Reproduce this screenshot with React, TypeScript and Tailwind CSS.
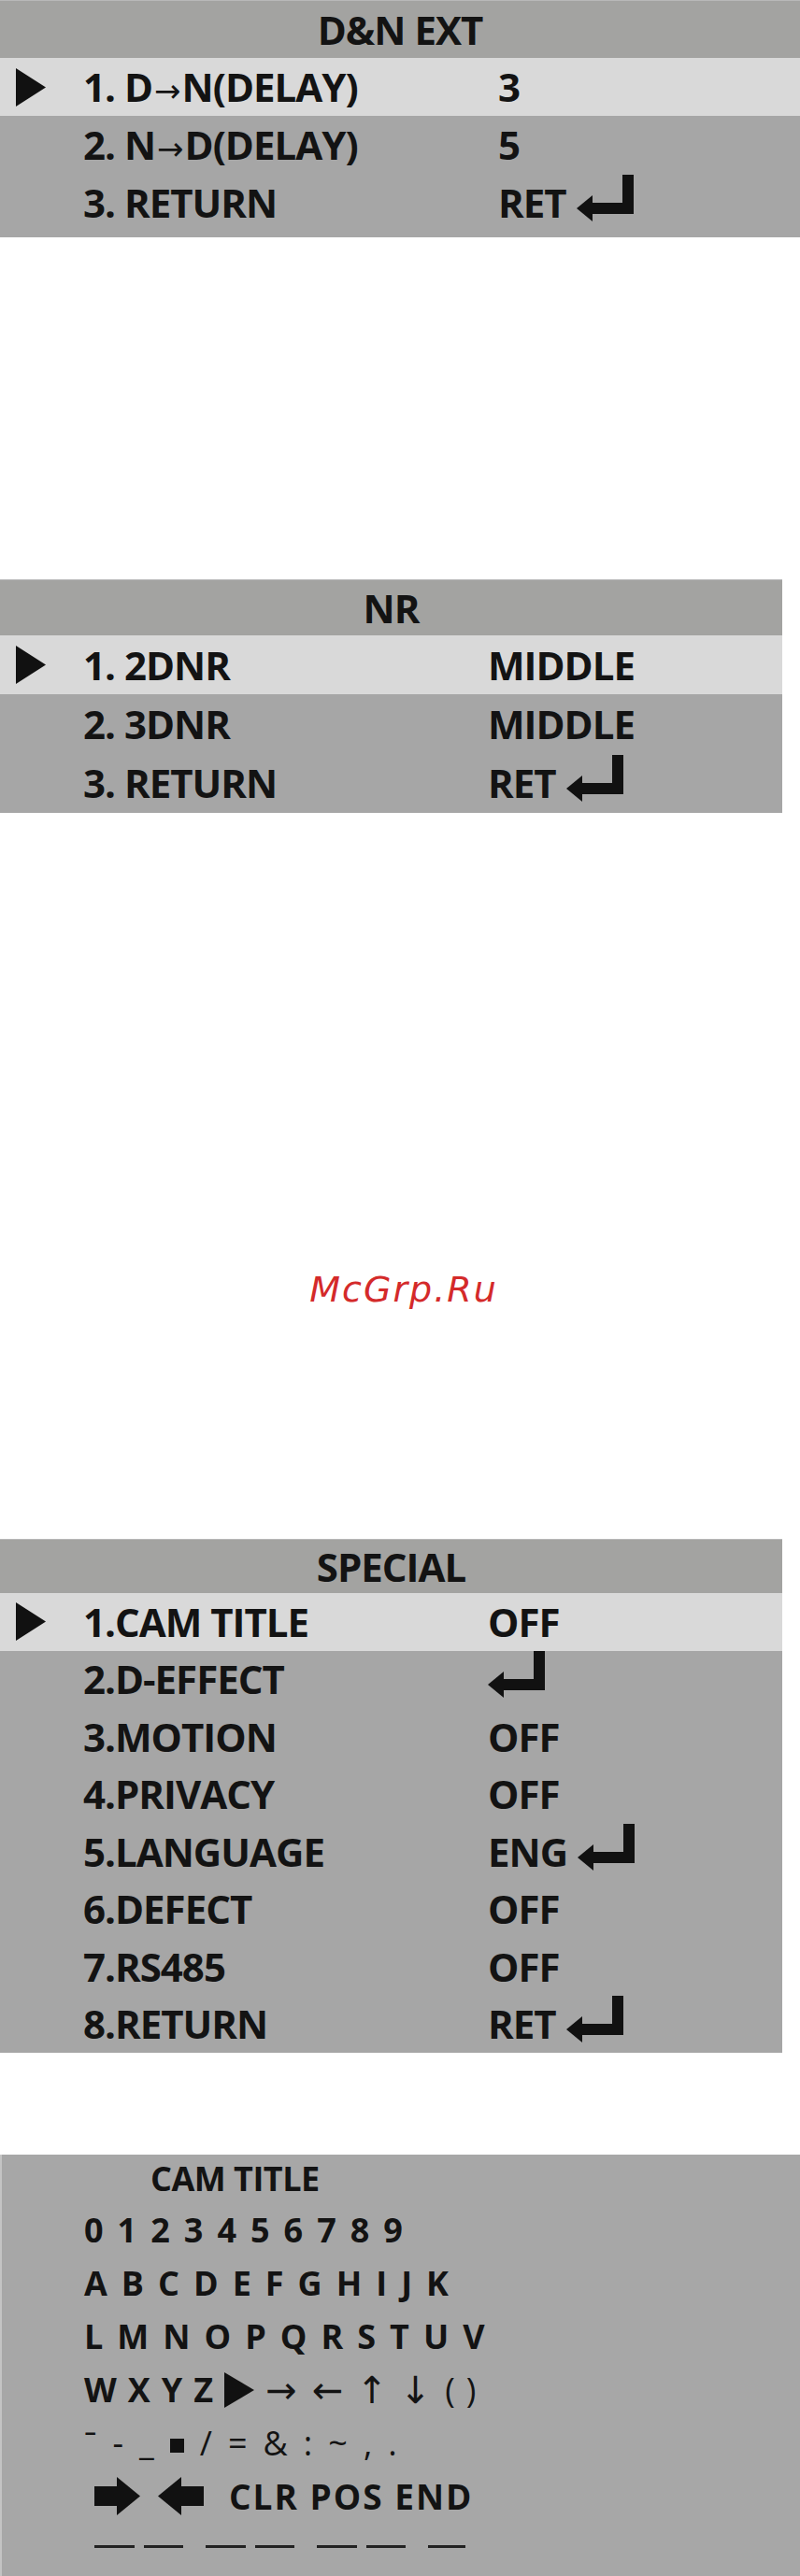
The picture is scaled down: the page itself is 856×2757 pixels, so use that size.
import type { ReactNode } from "react";
import clsx from "clsx";

type Item = {
  label: ReactNode;
  value?: string;
  enter?: boolean;
  active?: boolean;
};

function Pointer() {
  return (
    <svg width="32" height="41" viewBox="0 0 32 41">
      <polygon points="0,0 32,20.5 0,41" fill="#111" />
    </svg>
  );
}

// the "enter" key glyph used next to sub-menu values
function EnterKey() {
  return (
    <svg width="61" height="50" viewBox="0 0 61 50" className="mb-[10px] shrink-0">
      <rect x="49" y="0" width="12" height="42" fill="#111" />
      <rect x="14" y="30" width="47" height="12" fill="#111" />
      <polygon points="0,36 17,22 17,50" fill="#111" />
    </svg>
  );
}

function Arrow() {
  return <span className="font-normal font-['DejaVu_Sans',sans-serif] text-[34px] mx-[2px]">→</span>;
}

function MenuPanel({
  title,
  items,
  width,
  labelWidth,
  headerH,
  rowH,
  padBottom,
}: {
  title: string;
  items: Item[];
  width: string;
  labelWidth: string;
  headerH: string;
  rowH: string;
  padBottom: string;
}) {
  return (
    <section className={clsx("bg-[#a6a6a6] text-[#131313] font-bold text-[42px] tracking-[-1px] font-['Open_Sans',sans-serif]", width, padBottom)}>
      <div className={clsx("flex items-center justify-center bg-[#a3a3a1] border-t border-[#b8b8b8] leading-none", headerH)}>
        {title}
      </div>
      {items.map((item, i) => (
        <div key={i} className={clsx("flex items-center leading-none", rowH, item.active && "bg-[#d9d9d9]")}>
          <div className="w-[89px] pl-[17px] flex items-center">{item.active && <Pointer />}</div>
          <div className={clsx("whitespace-nowrap", labelWidth)}>{item.label}</div>
          <div className="flex items-center gap-[11px] whitespace-nowrap">
            {item.value && <span>{item.value}</span>}
            {item.enter && <EnterKey />}
          </div>
        </div>
      ))}
    </section>
  );
}

function BlockArrow({ flip }: { flip?: boolean }) {
  return (
    <svg width="49" height="41" viewBox="0 0 49 41" className={clsx("shrink-0", flip && "-scale-x-100")}>
      <rect x="0" y="10" width="26" height="21" fill="#111" />
      <polygon points="24,0 49,20.5 24,41" fill="#111" />
    </svg>
  );
}

const digits = "0123456789".split("");
const row1 = "ABCDEFGHIJK".split("");
const row2 = "LMNOPQRSTUV".split("");
const symbols = ["ˉ", "-", "_", "■", "/", "=", "&", ":", "~", ",", "."];

function CamTitle() {
  return (
    <section className="mt-[109px] h-[451px] w-full bg-[#a7a7a7] border-l-2 border-[#c4c4c4] text-[#131313] font-bold text-[36px] font-['Open_Sans',sans-serif]">
      <div className="h-[52px] flex items-center pl-[159px] tracking-[-0.5px]">CAM TITLE</div>
      <div className="h-[57px] flex items-center gap-[15px] pl-[88px]">
        {digits.map((d) => (
          <span key={d}>{d}</span>
        ))}
      </div>
      <div className="h-[57px] flex items-center gap-[15px] pl-[88px]">
        {row1.map((d) => (
          <span key={d}>{d}</span>
        ))}
      </div>
      <div className="h-[57px] flex items-center gap-[15px] pl-[88px]">
        {row2.map((d) => (
          <span key={d}>{d}</span>
        ))}
      </div>
      <div className="h-[57px] flex items-center gap-[12px] pl-[88px]">
        <span>W</span>
        <span>X</span>
        <span>Y</span>
        <span>Z</span>
        <svg width="32" height="38" viewBox="0 0 32 38" className="shrink-0">
          <polygon points="0,0 32,19 0,38" fill="#111" />
        </svg>
        <span className="font-normal font-['DejaVu_Sans',sans-serif] text-[40px] flex items-center gap-[16px]">
          <span>→</span>
          <span>←</span>
          <span className="-mx-[2px]">↑</span>
          <span className="-mx-[1px]">↓</span>
          <span className="font-['Open_Sans',sans-serif] text-[36px]">(</span>
          <span className="font-['Open_Sans',sans-serif] text-[36px] -ml-[4px]">)</span>
        </span>
      </div>
      <div className="h-[57px] flex items-center gap-[17px] pl-[88px] font-normal">
        {symbols.map((s) =>
          s === "■" ? <span key={s} className="w-[15px] h-[15px] bg-[#111] mt-[6px]" /> : <span key={s}>{s}</span>
        )}
      </div>
      <div className="h-[57px] flex items-center pl-[99px]">
        <BlockArrow />
        <span className="ml-[19px]">
          <BlockArrow flip />
        </span>
        <span className="ml-[27px] text-[37px] tracking-[2px]">CLR POS END</span>
      </div>
      <div className="flex items-center gap-[24px] pl-[99px] mt-[24px]">
        <div className="flex gap-[10px]">
          <span className="w-[43px] h-[3px] bg-[#222]" />
          <span className="w-[42px] h-[3px] bg-[#222]" />
        </div>
        <div className="flex gap-[10px]">
          <span className="w-[43px] h-[3px] bg-[#222]" />
          <span className="w-[42px] h-[3px] bg-[#222]" />
        </div>
        <div className="flex gap-[10px]">
          <span className="w-[43px] h-[3px] bg-[#222]" />
          <span className="w-[42px] h-[3px] bg-[#222]" />
        </div>
        <span className="w-[40px] h-[3px] bg-[#222]" />
      </div>
    </section>
  );
}

export default function App() {
  return (
    <div className="w-[856px] min-h-[2757px] bg-white flex flex-col">
      <MenuPanel
        title="D&N EXT"
        width="w-full"
        labelWidth="w-[444px]"
        headerH="h-[62px]"
        rowH="h-[62px]"
        padBottom="pb-[6px]"
        items={[
          { label: <>1. D<Arrow />N(DELAY)</>, value: "3", active: true },
          { label: <>2. N<Arrow />D(DELAY)</>, value: "5" },
          { label: "3. RETURN", value: "RET", enter: true },
        ]}
      />

      <div className="mt-[366px]">
        <MenuPanel
          title="NR"
          width="w-[837px]"
          labelWidth="w-[433px]"
          headerH="h-[60px]"
          rowH="h-[63px]"
          padBottom="pb-[1px]"
          items={[
            { label: "1. 2DNR", value: "MIDDLE", active: true },
            { label: "2. 3DNR", value: "MIDDLE" },
            { label: "3. RETURN", value: "RET", enter: true },
          ]}
        />
      </div>

      <div className="mt-[491px] h-[38px] leading-none text-center text-[38px] italic tracking-[2px] pl-[8px] text-[#d42a2a] font-['DejaVu_Sans',sans-serif]">
        McGrp.Ru
      </div>

      <div className="mt-[248px]">
        <MenuPanel
          title="SPECIAL"
          width="w-[837px]"
          labelWidth="w-[433px]"
          headerH="h-[58px]"
          rowH="h-[61.5px]"
          padBottom="pb-0"
          items={[
            { label: "1.CAM TITLE", value: "OFF", active: true },
            { label: "2.D-EFFECT", enter: true },
            { label: "3.MOTION", value: "OFF" },
            { label: "4.PRIVACY", value: "OFF" },
            { label: "5.LANGUAGE", value: "ENG", enter: true },
            { label: "6.DEFECT", value: "OFF" },
            { label: "7.RS485", value: "OFF" },
            { label: "8.RETURN", value: "RET", enter: true },
          ]}
        />
      </div>

      <CamTitle />
    </div>
  );
}
